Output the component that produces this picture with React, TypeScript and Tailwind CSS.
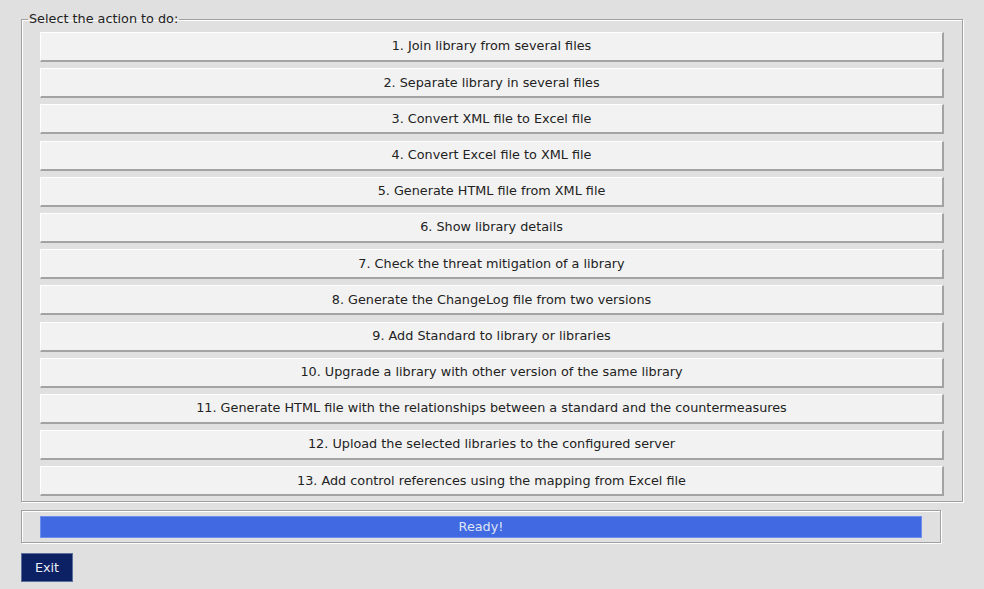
const ACTIONS = [
  "1. Join library from several files",
  "2. Separate library in several files",
  "3. Convert XML file to Excel file",
  "4. Convert Excel file to XML file",
  "5. Generate HTML file from XML file",
  "6. Show library details",
  "7. Check the threat mitigation of a library",
  "8. Generate the ChangeLog file from two versions",
  "9. Add Standard to library or libraries",
  "10. Upgrade a library with other version of the same library",
  "11. Generate HTML file with the relationships between a standard and the countermeasures",
  "12. Upload the selected libraries to the configured server",
  "13. Add control references using the mapping from Excel file",
];

function ActionButton({ label }: { label: string }) {
  return (
    <button className="h-[30px] w-full bg-[#f2f2f2] border-t border-l border-t-white border-l-white border-b-2 border-r-2 border-b-[#a3a3a3] border-r-[#a3a3a3] text-[12.8px] text-[#222] flex items-center justify-center pb-[1px]">
      {label}
    </button>
  );
}

export default function App() {
  return (
    <div className="w-[984px] h-[589px] bg-[#e0e0e0] pl-[21px] pt-[12px] font-['DejaVu_Sans',sans-serif] text-[12.8px]">
      <fieldset className="w-[942px] h-[490px] border border-[#a0a0a0] shadow-[inset_1px_1px_0_#fff,1px_1px_0_#fff] px-[18px] pt-[6px]">
        <legend className="-ml-[12px] px-[1px] text-[12.8px] leading-[14px] text-[#222]">
          Select the action to do:
        </legend>
        <div className="flex flex-col gap-[6.2px]">
          {ACTIONS.map((a) => (
            <ActionButton key={a} label={a} />
          ))}
        </div>
      </fieldset>
      <div className="mt-[8px] w-[920px] h-[33px] border border-[#a0a0a0] shadow-[inset_1px_1px_0_#fff,1px_1px_0_#fff] px-[18px] pt-[5px]">
        <div className="h-[22px] w-full bg-[#4169e1] border border-[#6f8eea] flex items-center justify-center text-[#dfe4f7] text-[12.8px]">
          Ready!
        </div>
      </div>
      <button className="mt-[10px] w-[52px] h-[29px] bg-[#0b2163] border border-[#5a6f9a] text-[#e8ecf5] text-[12.8px] flex items-center justify-center">
        Exit
      </button>
    </div>
  );
}
